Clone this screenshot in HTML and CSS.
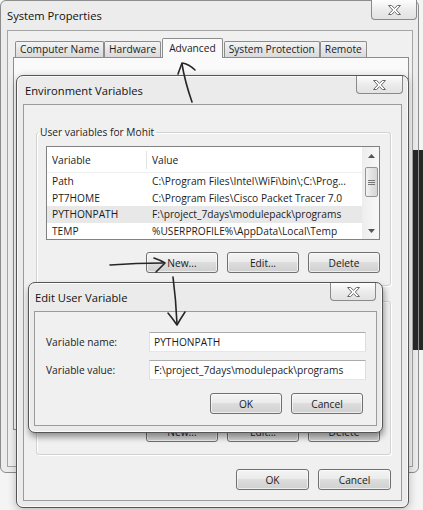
FILE: index.html
```html
<!DOCTYPE html>
<html>
<head>
<meta charset="utf-8">
<title>System Properties</title>
<link rel="stylesheet" href="styles.css">
</head>
<body>

<div class="win sys">
  <div class="titlebar">
    <span class="title">System Properties</span>
    <div class="close close-sys">
      <svg width="13" height="10" viewBox="0 0 13 10"><path d="M0.5 0.5H3.6L6.5 3.3L9.4 0.5H12.5L8.3 5L12.5 9.5H9.4L6.5 6.7L3.6 9.5H0.5L4.7 5Z" fill="#fff" stroke="#6a6a6a" stroke-width="1" stroke-linejoin="round"/></svg>
    </div>
  </div>
  <div class="client sys-client">
    <div class="tabs">
      <div class="tab">Computer Name</div>
      <div class="tab">Hardware</div>
      <div class="tab tab-sel">Advanced</div>
      <div class="tab">System Protection</div>
      <div class="tab">Remote</div>
    </div>
    <div class="tabpanel"></div>
  </div>
</div>

<div class="win env">
  <div class="titlebar">
    <span class="title">Environment Variables</span>
    <div class="close close-env">
      <svg width="13" height="10" viewBox="0 0 13 10"><path d="M0.5 0.5H3.6L6.5 3.3L9.4 0.5H12.5L8.3 5L12.5 9.5H9.4L6.5 6.7L3.6 9.5H0.5L4.7 5Z" fill="#fff" stroke="#6a6a6a" stroke-width="1" stroke-linejoin="round"/></svg>
    </div>
  </div>
  <div class="client env-client">
    <fieldset class="group">
      <legend>User variables for Mohit</legend>
      <div class="list">
        <div class="list-body">
          <div class="lv-head"><span class="c1">Variable</span><span class="c2">Value</span></div>
          <div class="lv-row"><span class="c1">Path</span><span class="c2">C:\Program Files\Intel\WiFi\bin\;C:\Prog...</span></div>
          <div class="lv-row"><span class="c1">PT7HOME</span><span class="c2">C:\Program Files\Cisco Packet Tracer 7.0</span></div>
          <div class="lv-row lv-sel"><span class="c1">PYTHONPATH</span><span class="c2">F:\project_7days\modulepack\programs</span></div>
          <div class="lv-row"><span class="c1">TEMP</span><span class="c2">%USERPROFILE%\AppData\Local\Temp</span></div>
        </div>
        <div class="vscroll">
          <div class="sb-btn"><svg width="7" height="4" viewBox="0 0 7 4"><path d="M0 4L3.5 0L7 4Z" fill="#555"/></svg></div>
          <div class="thumb"><svg width="7" height="5" viewBox="0 0 7 5"><path d="M0 0.5H7M0 2.5H7M0 4.5H7" stroke="#777" stroke-width="1"/></svg></div>
          <div class="sb-space"></div>
          <div class="sb-btn"><svg width="7" height="4" viewBox="0 0 7 4"><path d="M0 0L3.5 4L7 0Z" fill="#555"/></svg></div>
        </div>
      </div>
      <div class="btnrow">
        <div class="btn">New...</div>
        <div class="btn">Edit...</div>
        <div class="btn">Delete</div>
      </div>
    </fieldset>

    <div class="group group-sys">
      <div class="list"></div>
      <div class="btnrow">
        <div class="btn">New...</div>
        <div class="btn">Edit...</div>
        <div class="btn">Delete</div>
      </div>
    </div>

    <div class="btnrow dialog-btns">
      <div class="btn btn-wide">OK</div>
      <div class="btn btn-wide">Cancel</div>
    </div>
  </div>
</div>

<div class="win edit">
  <div class="titlebar">
    <span class="title">Edit User Variable</span>
    <div class="close close-edit">
      <svg width="13" height="10" viewBox="0 0 13 10"><path d="M0.5 0.5H3.6L6.5 3.3L9.4 0.5H12.5L8.3 5L12.5 9.5H9.4L6.5 6.7L3.6 9.5H0.5L4.7 5Z" fill="#fff" stroke="#6a6a6a" stroke-width="1" stroke-linejoin="round"/></svg>
    </div>
  </div>
  <div class="client edit-client">
    <div class="field-row">
      <span class="field-label">Variable name:</span>
      <div class="field">PYTHONPATH</div>
    </div>
    <div class="field-row">
      <span class="field-label">Variable value:</span>
      <div class="field">F:\project_7days\modulepack\programs</div>
    </div>
    <div class="btnrow edit-btns">
      <div class="btn">OK</div>
      <div class="btn">Cancel</div>
    </div>
  </div>
</div>

<svg class="ink" width="423" height="510" viewBox="0 0 423 510">
  <g fill="none" stroke="#262626" stroke-width="1.6" stroke-linecap="round" stroke-linejoin="round">
    <path d="M182 64 Q185 82 192 102"/>
    <path d="M178 74 L182 63 Q189 64 195 70"/>
    <path d="M110 265 Q136 263 163 263"/>
    <path d="M154 258 Q160 260 165 263 Q161 267 156 272"/>
    <path d="M173 277 Q176 300 177 324"/>
    <path d="M168 313 Q173 319 177 325 Q181 318 185 312"/>
  </g>
</svg>

</body>
</html>
```

FILE: styles.css
```css
* {
  box-sizing: border-box;
}

body {
  margin: 0;
  width: 423px;
  height: 510px;
  overflow: hidden;
  position: relative;
  font-family: "Open Sans", "Noto Sans", sans-serif;
  font-size: 10.2px;
  color: #1c1c1c;
  background:
    linear-gradient(#272727, #272727) right 0 top 150px / 5px 200px no-repeat,
    #f4f4f4;
}

/* ---------- generic window ---------- */
.win {
  position: absolute;
  display: flex;
  flex-direction: column;
  border: 1px solid #555;
  border-radius: 7px;
  background: #ebebeb;
  box-shadow: inset 0 0 0 1px rgba(255, 255, 255, 0.75);
}

.titlebar {
  flex: none;
  display: flex;
  align-items: center;
}

.title {
  font-size: 11.2px;
  color: #111;
}

.close {
  margin-left: auto;
  align-self: flex-start;
  display: flex;
  align-items: center;
  justify-content: center;
  border: 1px solid #8a8a8a;
  border-top: none;
  border-radius: 0 0 4px 4px;
  background: linear-gradient(#fdfdfd, #ececec 50%, #e2e2e2);
}

.client {
  flex: 1;
  display: flex;
  flex-direction: column;
  border: 1px solid #9b9b9b;
  background: #f0f0f0;
}

/* ---------- System Properties ---------- */
.sys {
  left: 0;
  top: 0;
  width: 419px;
  height: 473px;
  border-color: #8c8c8c;
  border-radius: 6px;
  box-shadow: none;
  background:
    linear-gradient(#272727, #272727) right 0 top 149px / 5px 200px no-repeat,
    #ececec;
}

.sys .titlebar {
  height: 29px;
  padding-left: 6px;
}

.close-sys {
  width: 46px;
  height: 20px;
  margin-top: -1px;
  margin-right: 1px;
}

.sys-client {
  margin: 0 5px 5px 6px;
  border-color: #a5a5a5;
  padding: 7px 3px 36px 5px;
}

.tabs {
  flex: none;
  height: 20px;
  display: flex;
  align-items: flex-end;
  padding-left: 2px;
  position: relative;
  z-index: 1;
}

.tab {
  height: 16px;
  margin-bottom: 1px;
  padding: 0 4px;
  line-height: 14px;
  border: 1px solid #8d8d8d;
  border-bottom: none;
  border-radius: 2px 2px 0 0;
  background: linear-gradient(#f4f4f4, #e6e6e6 50%, #dadada);
  white-space: nowrap;
}

.tab-sel {
  height: 20px;
  margin: 0 1px;
  padding: 0 6px;
  line-height: 18px;
  background: #fafafa;
}

.tabpanel {
  flex: 1;
  margin-top: -1px;
  border: 1px solid #8d8d8d;
  background: #fafafa;
}

/* ---------- Environment Variables ---------- */
.env {
  left: 16px;
  top: 75px;
  width: 393px;
  height: 433px;
  box-shadow: inset 0 0 0 1px rgba(255, 255, 255, 0.75), 0 2px 8px rgba(0, 0, 0, 0.25);
}

.env .titlebar {
  height: 28px;
  padding-left: 8px;
}

.close-env {
  width: 47px;
  height: 18px;
  margin-right: 5px;
}

.env-client {
  margin: 0 6px 6px 6px;
  padding: 20px 10px 0 12px;
}

.group {
  margin: 0;
  padding: 7px 10px 12px 9px;
  border: 1px solid #d2d2d2;
  border-radius: 3px;
  box-shadow: 1px 1px 0 #fff, inset 1px 1px 0 #fff;
  display: flex;
  flex-direction: column;
  min-width: 0;
}

.group legend {
  margin-left: -8px;
  padding: 0 2px;
  line-height: 14px;
}

.group-sys {
  margin-top: 15px;
  padding-top: 13px;
}

.list {
  height: 94px;
  display: flex;
  border: 1px solid #828282;
  background: #fff;
}

.list-body {
  flex: 1;
  min-width: 0;
}

.lv-head {
  height: 26px;
  display: flex;
  align-items: center;
  padding-top: 1px;
  border-bottom: 1px solid #f0f0f0;
}

.lv-head .c1 {
  border-right: 1px solid #e3e3e3;
  height: 18px;
  line-height: 18px;
}

.lv-row {
  height: 16.5px;
  display: flex;
  align-items: center;
}

.lv-sel {
  background: #e8e8e8;
}

.c1 {
  flex: none;
  width: 100px;
  padding-left: 5px;
  white-space: nowrap;
  overflow: hidden;
}

.c2 {
  flex: 1;
  min-width: 0;
  padding-left: 5px;
  white-space: nowrap;
  overflow: hidden;
}

.vscroll {
  flex: none;
  width: 17px;
  display: flex;
  flex-direction: column;
  align-items: center;
  border-left: 1px solid #ededed;
  background: linear-gradient(90deg, #eeeeee, #f8f8f8);
}

.sb-btn {
  height: 17px;
  width: 100%;
  display: flex;
  align-items: center;
  justify-content: center;
}

.thumb {
  margin-top: 3px;
  width: 13px;
  height: 30px;
  border: 1px solid #959595;
  border-radius: 2px;
  background: linear-gradient(90deg, #f2f2f2, #e2e2e2 50%, #d6d6d6);
  display: flex;
  align-items: center;
  justify-content: center;
}

.sb-space {
  flex: 1;
}

.btnrow {
  display: flex;
  justify-content: flex-end;
  gap: 9px;
  margin-top: 12px;
}

.btn {
  width: 72px;
  height: 21px;
  display: flex;
  align-items: center;
  justify-content: center;
  border: 1px solid #707070;
  border-radius: 3px;
  background: linear-gradient(#f4f4f4, #ebebeb 45%, #dddddd 50%, #d0d0d0);
  box-shadow: inset 0 0 0 1px rgba(255, 255, 255, 0.6);
  color: #1c1c1c;
}

.btn-wide {
  width: 73px;
}

.dialog-btns {
  margin-top: 14px;
}

/* ---------- Edit User Variable ---------- */
.edit {
  left: 28px;
  top: 282px;
  width: 355px;
  height: 151px;
  box-shadow: inset 0 0 0 1px rgba(255, 255, 255, 0.8), 1px 4px 6px rgba(0, 0, 0, 0.4);
}

.edit .titlebar {
  height: 28px;
  padding-left: 6px;
}

.close-edit {
  width: 46px;
  height: 18px;
  margin-right: 6px;
}

.edit-client {
  margin: 0 5px 6px 5px;
  padding: 20px 10px 11px 11px;
}

.field-row {
  display: flex;
  align-items: center;
}

.field-row + .field-row {
  margin-top: 8px;
}

.field-label {
  flex: none;
  width: 103px;
}

.field {
  flex: 1;
  height: 20px;
  line-height: 18px;
  padding: 0 4px;
  background: #fff;
  border: 1px solid;
  border-color: #ababab #dddddd #e6e6e6 #e0e0e0;
  white-space: nowrap;
  overflow: hidden;
}

.edit-btns {
  margin-top: 13px;
  margin-right: 3px;
}

/* ---------- hand-drawn arrows ---------- */
.ink {
  position: absolute;
  left: 0;
  top: 0;
  pointer-events: none;
}
```
